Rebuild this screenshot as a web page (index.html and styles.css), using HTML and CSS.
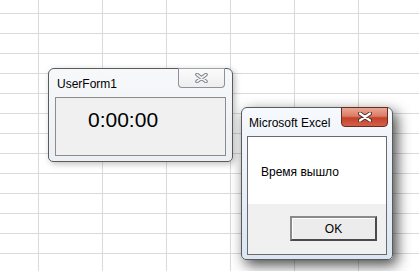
FILE: index.html
```html
<!DOCTYPE html>
<html lang="ru">
<head>
  <meta charset="UTF-8" />
  <title>Excel</title>
  <link rel="stylesheet" href="styles.css">
</head>
<body>
  <div class="sheet">
    <div class="window userform">
      <div class="titlebar">UserForm1</div>
      <div class="close-btn inactive">
        <svg width="13" height="10" viewBox="0 0 13 10">
          <path d="M2 1.5 L11 8.5 M11 1.5 L2 8.5" stroke="#7d838c" stroke-width="3.6" stroke-linecap="round"/>
          <path d="M2 1.5 L11 8.5 M11 1.5 L2 8.5" stroke="#f4f4f4" stroke-width="1.6" stroke-linecap="round"/>
        </svg>
      </div>
      <div class="client form-body">
        <div class="timer">0:00:00</div>
      </div>
    </div>

    <div class="window msgbox">
      <div class="titlebar">Microsoft Excel</div>
      <div class="close-btn active">
        <svg width="14" height="10" viewBox="0 0 14 10">
          <path d="M2 1.5 L12 8.5 M12 1.5 L2 8.5" stroke="#4a2a26" stroke-width="4" stroke-linecap="round"/>
          <path d="M2 1.5 L12 8.5 M12 1.5 L2 8.5" stroke="#ffffff" stroke-width="2.2" stroke-linecap="round"/>
        </svg>
      </div>
      <div class="client msg-body">
        <div class="message">Время вышло</div>
        <div class="footer">
          <button class="ok-btn">OK</button>
        </div>
      </div>
    </div>
  </div>
</body>
</html>
```

FILE: styles.css
```css
html, body {
  margin: 0;
  height: 100%;
  overflow: hidden;
}

body {
  font-family: 'Liberation Sans', Arial, sans-serif;
  font-size: 12px;
  color: #000;
  background-color: #fff;
}

.sheet {
  position: relative;
  width: 419px;
  height: 271px;
  background-color: #fff;
  background-image:
    linear-gradient(to right, #dadada 1px, transparent 1px),
    linear-gradient(to bottom, #dadada 1px, transparent 1px);
  background-size: 64px 20px;
  background-position: 38px 13px;
}

.window {
  position: absolute;
  box-sizing: border-box;
  display: flex;
  flex-direction: column;
  border: 1px solid #5b5b5b;
  border-radius: 6px 6px 5px 5px;
}

.userform {
  left: 48px;
  top: 68px;
  width: 185px;
  height: 94px;
  padding: 0 6px 5px;
  background: linear-gradient(#f7f8fa, #eceff3);
  box-shadow: 2px 2px 6px rgba(0, 0, 0, 0.25);
}

.msgbox {
  left: 241px;
  top: 107px;
  width: 152px;
  height: 153px;
  padding: 0 5px 4px;
  background: linear-gradient(#f6f9fd, #dbe6f3);
  box-shadow: 4px 5px 14px rgba(0, 0, 0, 0.72);
}

.titlebar {
  height: 28px;
  line-height: 30px;
  padding-left: 2px;
  white-space: nowrap;
}

.close-btn {
  position: absolute;
  top: -1px;
  width: 47px;
  height: 20px;
  box-sizing: border-box;
  display: flex;
  align-items: center;
  justify-content: center;
  border-radius: 0 0 4px 4px;
}

.close-btn.inactive {
  right: 7px;
  border: 1px solid #8d9199;
  border-top-color: #a0a4aa;
  background: linear-gradient(#fbfbfb, #eeeeee);
}

.close-btn.active {
  right: 4px;
  border: 1px solid #6b2a1e;
  background: linear-gradient(#e9a796 0%, #dc7c66 45%, #c4412a 55%, #d2614a 100%);
}

.client {
  flex: 1;
  box-sizing: border-box;
  border: 1px solid #8a8a8a;
}

.form-body {
  background-color: #f0f0f0;
  border-color: #8c8c8c;
}

.timer {
  margin: 10px 0 0 32px;
  font-size: 21px;
  line-height: 24px;
}

.msg-body {
  display: flex;
  flex-direction: column;
  border-color: #6a6a6a;
  background-color: #fff;
}

.message {
  height: 67px;
  box-sizing: border-box;
  padding: 28px 0 0 13px;
  line-height: 14px;
}

.footer {
  flex: 1;
  display: flex;
  justify-content: flex-end;
  align-items: flex-start;
  padding: 12px 9px 0 0;
  background-color: #f0f0f0;
}

.ok-btn {
  width: 87px;
  height: 25px;
  box-sizing: border-box;
  font-family: 'Liberation Sans', Arial, sans-serif;
  font-size: 12px;
  color: #000;
  border: 2px solid;
  border-color: #8a8a8a #4a4a4a #4a4a4a #8a8a8a;
  background: #ececec;
  box-shadow: inset 1px 1px 0 #fdfdfd;
  padding: 0;
}
```
